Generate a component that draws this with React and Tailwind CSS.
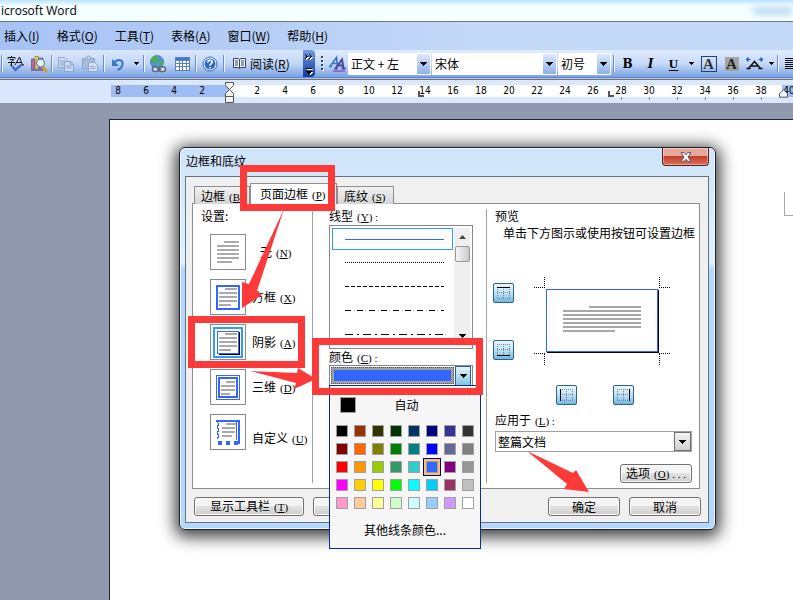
import React from "react";

const CJK = "font-['Noto_Sans_CJK_SC',sans-serif]";

function Sep() {
  return (
    <span className="flex h-[17px] w-1 shrink-0 justify-center">
      <span className="w-px bg-[#6a8ccb]" />
      <span className="w-px bg-[#f1f6ff]" />
    </span>
  );
}

function Tool({ label, children, width = "w-6" }) {
  return (
    <button type="button" aria-label={label} className={`flex h-6 shrink-0 items-center justify-center ${width}`}>
      {children}
    </button>
  );
}

function Caret({ className = "" }) {
  return (
    <svg width="7" height="4" viewBox="0 0 7 4" className={className} shapeRendering="crispEdges">
      <path d="M0 0h7v1H0zM1 1h5v1H1zM2 2h3v1H2zM3 3h1v1H3z" fill="#000" />
    </svg>
  );
}

function SmallCaret() {
  return (
    <svg width="5" height="3" viewBox="0 0 5 3" shapeRendering="crispEdges">
      <path d="M0 0h5v1H0zM1 1h3v1H1zM2 2h1v1H2z" fill="#000" />
    </svg>
  );
}

function Combo({ label, value, width }) {
  return (
    <label className={`mr-px flex h-[22px] shrink-0 border border-white bg-white ${width}`}>
      <select aria-label={label} className="min-w-0 flex-1 appearance-none bg-white pl-[2px] text-xs leading-[18px] text-black outline-none">
        <option>{value}</option>
      </select>
      <span className="flex w-[13px] items-center justify-center bg-linear-to-b from-[#dce9fc] to-[#8fb1e8]">
        <Caret />
      </span>
    </label>
  );
}

const menus = [
  ["插入", "I"],
  ["格式", "O"],
  ["工具", "T"],
  ["表格", "A"],
  ["窗口", "W"],
  ["帮助", "H"],
];

function MenuBar() {
  return (
    <nav className="flex h-7 shrink-0 items-center gap-[17px] bg-linear-to-r from-[#a6c2f5] to-[#c4d8f8] to-60% pl-1 text-xs">
      {menus.map(([name, key]) => (
        <button type="button" key={key} className="shrink-0 whitespace-nowrap">
          {name}(<u className="underline-offset-2">{key}</u>)
        </button>
      ))}
    </nav>
  );
}

function ToolBar() {
  return (
    <div className="flex h-[27px] shrink-0 items-center overflow-hidden bg-linear-to-b from-[#dbe8fd] via-[#c2d7f8] to-[#7ba2e2]">
      <Sep />
      <Tool label="拼写和语法" width="w-[23px]">
        <svg width="18" height="18" viewBox="0 0 18 18" fill="none">
          <path d="M1 4V2.500H8V4M4.500 1v1.500M2.500 4.500H7L4.500 6.500V10.500L3 10M1 7.500H8" stroke="#111" />
          <path d="M8 10L12.500 2L15.500 10M9.500 7.500H15M14 10H17" stroke="#111" />
          <path d="M5 11L8.500 15L14 10" stroke="#3f6fd0" strokeWidth="2.500" />
        </svg>
      </Tool>
      <Tool label="信息检索" width="w-[23px]">
        <svg width="18" height="18" viewBox="0 0 18 18">
          <path d="M1.500 4h3v10h-3z" fill="#b06aa8" stroke="#6b3572" strokeWidth=".6" />
          <path d="M5 1.500h3.500V14H5z" fill="#e9cf72" stroke="#8c661e" strokeWidth=".6" />
          <path d="M9 3h4v11H9z" fill="#7d88c8" stroke="#4a4f96" strokeWidth=".6" />
          <path d="M1 14h13v2H1z" fill="#8a6a9a" />
          <path d="M12.500 11.500L17 17" stroke="#d9a02c" strokeWidth="2.800" />
          <circle cx="10.500" cy="8" r="4" fill="#e4f1fb" stroke="#6a7894" strokeWidth="1.200" />
        </svg>
      </Tool>
      <Sep />
      <Tool label="复制">
        <svg width="18" height="18" viewBox="0 0 18 18" fill="#ccd9f0" stroke="#91a5cc">
          <path d="M1.500 2.500h6l3 3v7h-9zM3 6h5M3 8h5M3 10h5" />
          <path d="M7.500 6.500h6l3 3v7h-9zM9 11h5.500M9 13h5.500M13.500 6.500v3h3" />
        </svg>
      </Tool>
      <Tool label="粘贴">
        <svg width="18" height="18" viewBox="0 0 18 18" stroke="#91a5cc">
          <path d="M1.500 3.500h12v10h-12z" fill="#a9bbdd" />
          <path d="M5 4.500V2.500h1.500V1h2v1.500H10v2z" fill="#d7e1f4" />
          <path d="M7.500 7.500h6l3 3v6h-9zM9 11.500h5.500M9 13.500h5.500" fill="#d7e1f4" />
        </svg>
      </Tool>
      <Sep />
      <Tool label="撤消">
        <svg width="14" height="14" viewBox="0 0 14 14" fill="none">
          <path d="M3 6C6 2 12 2 11.500 7C11.200 10 9 12 6.500 13" stroke="#3f73cf" strokeWidth="2.200" />
          <path d="M1 2v7h7z" fill="#3f73cf" />
        </svg>
      </Tool>
      <Tool label="撤消列表" width="w-3">
        <SmallCaret />
      </Tool>
      <Sep />
      <Tool label="插入超链接">
        <svg width="18" height="18" viewBox="0 0 18 18">
          <circle cx="8" cy="7" r="6.500" fill="#4f93dc" stroke="#2a5aa0" strokeWidth=".6" />
          <path d="M3 3C5 0 9 1 10 1.500L8.500 4L10 6L7 8.500L5 7L3 8L1.800 6zM11 6l3 1-1 4-3-2z" fill="#4caf50" />
          <g fill="none" stroke="#5b6678" strokeWidth="1.500">
            <rect x="3.500" y="12" width="6.500" height="4.500" rx="2.200" fill="#dfe6f0" />
            <rect x="10" y="12" width="6.500" height="4.500" rx="2.200" fill="#dfe6f0" />
            <path d="M7.500 14.200h5" />
          </g>
        </svg>
      </Tool>
      <Tool label="插入表格">
        <svg width="15" height="14" viewBox="0 0 15 14" shapeRendering="crispEdges">
          <rect width="15" height="14" fill="#5f80c0" />
          <rect x="1" y="1" width="13" height="2" fill="#3f74d8" />
          <path d="M1 4h3v2H1zM5 4h2v2H5zM8 4h3v2H8zM12 4h2v2h-2zM1 7h3v2H1zM5 7h2v2H5zM8 7h3v2H8zM12 7h2v2h-2zM1 10h3v3H1zM5 10h2v3H5zM8 10h3v3H8zM12 10h2v3h-2z" fill="#fff" />
        </svg>
      </Tool>
      <Sep />
      <Tool label="帮助">
        <svg width="16" height="16" viewBox="0 0 16 16" fill="none">
          <circle cx="8" cy="8" r="7" fill="#fff" stroke="#3265ba" />
          <circle cx="8" cy="8" r="5.500" fill="#2d68ce" />
          <path d="M5.800 6.500C5.800 3.500 10.300 3.600 10.200 6.300C10.200 7.800 8 7.700 8 9.800M8 11v1.600" stroke="#fff" strokeWidth="1.600" />
        </svg>
      </Tool>
      <Sep />
      <button type="button" className="flex h-6 w-[77px] shrink-0 items-center gap-[3px] whitespace-nowrap pl-[6px] text-xs">
        <svg width="15" height="13" viewBox="0 0 15 13" fill="none" stroke="#39435a">
          <path d="M1.500 1.500h4.500l1.500 1L9 1.500h4.500v9H9l-1.500 1L6 10.500H1.500z" fill="#eef3fc" />
          <path d="M7.500 2.500v9M3 4h3M3 6h3M3 8h3M9 4h3M9 6h3M9 8h3" />
        </svg>
        <span>
          阅读(<u className="underline-offset-2">R</u>)
        </span>
      </button>
      <button type="button" aria-label="工具栏选项" className="flex h-full w-3 shrink-0 flex-col items-center justify-between rounded-r-sm bg-linear-to-b from-[#6f9be2] to-[#0c3a98] pt-1 pb-[2px]">
        <svg width="8" height="6" viewBox="0 0 8 6" shapeRendering="crispEdges">
          <path d="M1 1h1v1h1v1h1v1H3v1H2v1H1zM5 1h1v1h1v1h1v1H7v1H6v1H5z" fill="#fff" />
          <path d="M0 0h1v1h1v1h1v1H2v1H1v1H0V4h1V1H0zM4 0h1v1h1v1h1v1H6v1H5v1H4V4h1V1H4z" fill="#000" />
        </svg>
        <svg width="8" height="8" viewBox="0 0 8 8" shapeRendering="crispEdges">
          <path d="M2 2h6v1H2zM3 5h5v1H7v1H6v1H5V7H4z" fill="#fff" />
          <path d="M1 1h6v1H1zM1 4h6v1H6v1H5v1H3V6H2V5H1z" fill="#000" />
        </svg>
      </button>
      <div className="ml-[2px] flex h-full flex-1 items-center rounded-l-sm bg-linear-to-b from-[#e0ebfe] via-[#c6daf9] to-[#7ba2e2]">
        <svg width="9" height="17" viewBox="0 0 9 17" shapeRendering="crispEdges" className="shrink-0">
          <path d="M5 2h2v2H5zM5 6h2v2H5zM5 10h2v2H5zM5 14h2v2H5z" fill="#fff" />
          <path d="M4 1h2v2H4zM4 5h2v2H4zM4 9h2v2H4zM4 13h2v2H4z" fill="#274176" />
        </svg>
        <Tool label="格式窗格" width="w-[22px]">
          <svg width="17" height="17" viewBox="0 0 17 17" fill="none">
            <path d="M1 11.500L7.500 2.500L8.500 11.500M4 8.500h4.500M0 11.500h3" stroke="#3976cc" strokeWidth="1.600" />
            <path d="M6.500 13.500L13 4.500L14.500 13.500M9.500 10.500h4.500M5.500 13.500h3M12.500 13.500h4" stroke="#4a489c" strokeWidth="2" />
            <path d="M4 16h12" stroke="#9354c0" strokeWidth="1.500" />
          </svg>
        </Tool>
        <Combo label="样式" value="正文 + 左" width="w-[83px]" />
        <Combo label="字体" value="宋体" width="w-[125px]" />
        <Combo label="字号" value="初号" width="w-[53px]" />
        <Sep />
        <Tool label="加粗" width="w-[23px]">
          <span className="font-['DejaVu_Serif',serif] text-[12px] font-bold leading-4">B</span>
        </Tool>
        <Tool label="倾斜" width="w-[23px]">
          <span className="font-['DejaVu_Serif',serif] text-[12px] font-bold italic leading-4">I</span>
        </Tool>
        <Tool label="下划线" width="w-[23px]">
          <span className="font-['Liberation_Serif',serif] text-[13px] font-bold leading-4 underline underline-offset-2">U</span>
        </Tool>
        <Tool label="下划线样式" width="w-3">
          <SmallCaret />
        </Tool>
        <Tool label="字符边框" width="w-[23px]">
          <span className="flex size-4 items-center justify-center border border-[#24406f] font-['Liberation_Serif',serif] text-[15px] font-bold leading-4 text-[#333]">A</span>
        </Tool>
        <Tool label="字符底纹" width="w-[23px]">
          <span className="flex size-[14px] items-center justify-center bg-[#a3a3a3] font-['Liberation_Serif',serif] text-[15px] font-bold leading-4 text-[#222]">A</span>
        </Tool>
        <Tool label="字符缩放" width="w-[23px]">
          <svg width="17" height="14" viewBox="0 0 17 14" fill="none">
            <path d="M2.500 11.500L8.500 4.500L14.500 11.500M5 9h7M.500 11.500h4M12.500 11.500h4" stroke="#111" strokeWidth="1.500" />
            <path d="M0 2.500h4.500M2.500 .500L.500 2.500L2.500 4.500M12.500 2.500h4.500M14.500 .500L16.500 2.500L14.500 4.500" stroke="#1852d0" strokeWidth="1.200" />
          </svg>
        </Tool>
        <Tool label="缩放列表" width="w-[10px]">
          <SmallCaret />
        </Tool>
        <Sep />
        <Tool label="对齐">
          <svg width="14" height="11" viewBox="0 0 14 11" shapeRendering="crispEdges">
            <path d="M0 0h14v1H0zM0 2h14v1H0zM0 4h14v1H0zM0 6h14v1H0zM0 8h14v1H0zM0 10h14v1H0z" fill="#111" />
          </svg>
        </Tool>
      </div>
    </div>
  );
}

const rulerNumbers = Array.from({ length: 19 }, (_, i) => (i + 1) * 2);

function Ruler() {
  return (
    <div className="relative flex h-[23px] shrink-0 overflow-hidden bg-[#dbe7fd] pt-[5px] pl-[111px] text-center font-['DejaVu_Sans_Condensed','DejaVu_Sans',sans-serif] text-[10px] leading-3">
      <div className="flex h-3 w-[119px] shrink-0 bg-[#9fbcf4]">
        <span className="w-[21px] pr-[7px]">8</span>
        <span className="w-7">6</span>
        <span className="w-7">4</span>
        <span className="w-7">2</span>
      </div>
      <div className="flex h-3 w-[552px] shrink-0 bg-white pl-[13px]">
        {rulerNumbers.map((n) => (
          <span key={n} className="flex w-7 shrink-0 flex-col items-center">
            <span>{n}</span>
            {n >= 28 && <span className="h-[3px] w-px shrink-0 bg-[#7c8494]" />}
          </span>
        ))}
      </div>
      <div className="h-3 flex-1 bg-[#9fbcf4]">
        <span className="block w-[14px]">40</span>
      </div>
      <svg width="9" height="21" viewBox="0 0 9 21" fill="#f4f4f4" stroke="#555" className="absolute top-[2px] left-[225px]">
        <path d="M.500 .500h8v3L4.500 7.500L.500 3.500zM4.500 7.500l4 4v3H.500v-3zM.500 14.500h8v6h-8z" />
      </svg>
      <svg width="6" height="6" viewBox="0 0 6 6" className="absolute top-[11px] left-[418px]">
        <path d="M0 0h2v4h4v2H0z" fill="#555" />
      </svg>
      <svg width="6" height="6" viewBox="0 0 6 6" className="absolute top-[11px] left-[608px]">
        <path d="M0 0h2v4h4v2H0z" fill="#555" />
      </svg>
      <svg width="9" height="9" viewBox="0 0 9 9" className="absolute top-[9px] left-[779px]">
        <path d="M4.500 .700l4 4v3.500H.500V4.700z" fill="#f4f4f4" stroke="#555" />
      </svg>
    </div>
  );
}

/* Access key shown after a dialog label, e.g. (N) */
function Key({ k, after = "" }) {
  return (
    <span className="ml-1 font-['Liberation_Serif',serif] text-[11px]">
      (<u className="underline-offset-1">{k}</u>){after}
    </span>
  );
}

function DialogButton({ children, width }) {
  return (
    <button type="button" className={`h-[19px] shrink-0 whitespace-nowrap rounded-[3px] border border-[#707070] bg-linear-to-b from-[#f4f4f4] from-45% via-[#e2e2e2] via-50% to-[#cdcdcd] text-xs leading-[15px] shadow-[inset_0_0_0_1px_#fafafa] ${width}`}>
      {children}
    </button>
  );
}

const textLines = "M14 7h15v2H14zM7 11h22v2H7zM7 15h22v2H7zM7 19h22v2H7zM7 23h22v2H7zM7 27h15v2H7z";
const innerLines = "M15 9h12v2H15zM9 13h18v2H9zM9 17h18v2H9zM9 21h18v2H9zM9 25h12v2H9z";

const settings = [
  { name: "无", k: "N", pad: "pl-2", art: <path d={textLines} fill="#aaa" /> },
  {
    name: "方框",
    k: "X",
    pad: "",
    art: (
      <>
        <rect x="7" y="7" width="22" height="23" fill="none" stroke="#36f" strokeWidth="2" />
        <path d={innerLines} fill="#aaa" />
      </>
    ),
  },
  {
    name: "阴影",
    k: "A",
    pad: "",
    art: (
      <>
        <rect x="4" y="4" width="28" height="29" fill="none" stroke="#39f" strokeWidth="2" />
        <path d="M28 8h2v23H9v-2h19z" fill="#000" />
        <rect x="7.500" y="7.500" width="21" height="22" fill="#fff" stroke="#36f" />
        <path d={innerLines} fill="#aaa" />
      </>
    ),
  },
  {
    name: "三维",
    k: "D",
    pad: "",
    art: (
      <>
        <rect x="6.500" y="6.500" width="23" height="24" fill="none" stroke="#36f" />
        <rect x="9" y="9" width="18" height="19" fill="none" stroke="#36f" strokeWidth="2" />
        <path d="M16 12h9v2h-9zM11 16h14v2H11zM11 20h14v2H11zM11 24h9v2h-9z" fill="#aaa" />
      </>
    ),
  },
  {
    name: "自定义",
    k: "U",
    pad: "pt-3",
    art: (
      <>
        <path d="M6 6h24v2H6zM26 8h1v18h-1zM28 8h2v22h-2zM8 27h4v4H8zM16 27h4v4h-4zM24 27h4v4h-4z" fill="#36f" />
        <path d="M7 8l2 2-2 3 2 3-2 3 2 3-2 3" fill="none" stroke="#36f" />
        <path d="M16 9h10v2H16zM12 13h13v2H12zM12 17h13v2H12zM12 21h10v2H12z" fill="#aaa" />
      </>
    ),
  },
];

function SettingsColumn() {
  return (
    <fieldset className="flex w-[120px] shrink-0 flex-col border-r border-[#a0a0a0] pl-2">
      <div className="h-[25px] leading-[14px]">设置:</div>
      <div className="flex flex-col gap-[9px] pl-[9px]">
        {settings.map((s, i) => (
          <label key={s.k} className="flex h-9 items-center gap-[6px] whitespace-nowrap">
            <input type="radio" name="border-setting" defaultChecked={i === 2} className="sr-only" />
            <svg width="36" height="36" viewBox="1 1 34 34" shapeRendering="crispEdges" className="shrink-0 border border-[#8a8a92] bg-white">
              {s.art}
            </svg>
            <span className={s.pad}>
              {s.name}
              <Key k={s.k} />
            </span>
          </label>
        ))}
      </div>
    </fieldset>
  );
}

const palette = [
  "bg-[#000000]", "bg-[#993300]", "bg-[#333300]", "bg-[#003300]", "bg-[#003366]", "bg-[#000080]", "bg-[#333399]", "bg-[#333333]",
  "bg-[#800000]", "bg-[#ff6600]", "bg-[#808000]", "bg-[#008000]", "bg-[#008080]", "bg-[#0000ff]", "bg-[#666699]", "bg-[#808080]",
  "bg-[#ff0000]", "bg-[#ff9900]", "bg-[#99cc00]", "bg-[#339966]", "bg-[#33cccc]", "bg-[#3366ff]", "bg-[#800080]", "bg-[#969696]",
  "bg-[#ff00ff]", "bg-[#ffcc00]", "bg-[#ffff00]", "bg-[#00ff00]", "bg-[#00ffff]", "bg-[#00ccff]", "bg-[#993366]", "bg-[#c0c0c0]",
  "bg-[#ff99cc]", "bg-[#ffcc99]", "bg-[#ffff99]", "bg-[#ccffcc]", "bg-[#ccffff]", "bg-[#99ccff]", "bg-[#cc99ff]", "bg-[#ffffff]",
];

function ColorMenu() {
  return (
    <div className="absolute top-5 left-0 z-10 w-[152px] border border-[#0a2f8c] bg-[#f6f6f6] px-[3px] pt-[10px] pb-2">
      <button type="button" className="flex h-[18px] w-full items-center pl-[7px]">
        <span className="size-4 border border-[#a0a0a0] bg-black" />
        <span className="flex-1 pr-5 text-center leading-[18px]">自动</span>
      </button>
      <div className="mt-2 grid grid-cols-8">
        {palette.map((c, i) => (
          <button
            type="button"
            key={c}
            aria-label={c.slice(4, 11)}
            className={`flex size-[18px] items-center justify-center ${i === 21 ? "border border-[#000080] bg-[#ffc06f]" : ""}`}
          >
            <span className={`size-3 border border-[#a0a0a0] ${c}`} />
          </button>
        ))}
      </div>
      <button type="button" className="mt-2 block h-5 w-full text-center leading-5">
        其他线条颜色...
      </button>
    </div>
  );
}

const lineStyles = ["1 1", "4 2", "6 6", "8 4 2 4"];

function StyleColumn() {
  return (
    <div className="flex w-[174px] shrink-0 flex-col border-r border-[#a0a0a0] pl-4">
      <div className="h-4 leading-[14px]">
        线型
        <Key k="Y" after=" :" />
      </div>
      <div className="flex h-[124px] w-36 border border-[#828790] bg-white p-[2px]">
        <div className="flex flex-1 flex-col overflow-hidden">
          <div className="flex h-[22px] w-[121px] shrink-0 items-center border border-[#39f] pl-3">
            <span className="h-px w-[99px] bg-[#36f]" />
          </div>
          {lineStyles.map((dash) => (
            <svg key={dash} width="121" height="24" viewBox="0 0 121 24" shapeRendering="crispEdges" className="shrink-0">
              <path d="M13 12.500H112" stroke="#000" strokeDasharray={dash} />
            </svg>
          ))}
        </div>
        <div className="flex w-4 flex-col items-center justify-between bg-[#efefef] pt-[7px] pb-2">
          <div className="flex flex-col items-center gap-[7px]">
            <svg width="7" height="4" viewBox="0 0 7 4">
              <path d="M3.500 0L7 4H0z" fill="#444" />
            </svg>
            <span className="h-4 w-[15px] rounded-xs border border-[#979797] bg-linear-to-r from-[#f6f6f6] to-[#c9c9c9]" />
          </div>
          <Caret />
        </div>
      </div>
      <div className="h-4 leading-4">
        颜色
        <Key k="C" after=" :" />
      </div>
      <div className="relative w-36">
        <button type="button" aria-label="颜色" className="flex h-[21px] w-full border border-[#828790] bg-white p-px">
          <span className="flex h-[17px] flex-1 border border-dotted border-[#555] bg-[#a0a0a0] p-[2px]">
            <span className="flex-1 bg-[#36f]" />
          </span>
          <span className="-my-px ml-px flex h-5 w-4 items-center justify-center border border-[#2c628b] bg-linear-to-b from-[#e3f4fc] to-[#7fc5ea]">
            <Caret />
          </span>
        </button>
        <ColorMenu />
      </div>
    </div>
  );
}

const edgePaths = {
  上框线: "M4 4h13v1H4z",
  下框线: "M4 15h13v1H4z",
  左框线: "M4 4h1v12H4z",
  右框线: "M16 4h1v12h-1z",
};

function EdgeButton({ name }) {
  return (
    <button type="button" aria-label={name} className="block h-5 w-[21px] rounded-xs border border-[#2c628b] bg-linear-to-b from-[#eaf6fd] via-[#bfe3f5] to-[#6fb8e2]">
      <svg width="19" height="18" viewBox="1 1 19 18" shapeRendering="crispEdges">
        <path d="M4 4.500h13M4 9.500h13M4 15.500h13M4.500 4v12M10.500 4v12M16.500 4v12" stroke="#7a8b98" strokeDasharray="1 1" />
        <path d={edgePaths[name]} fill="#000" />
      </svg>
    </button>
  );
}

function PreviewColumn() {
  return (
    <div className="flex min-w-0 flex-1 flex-col pr-[7px] pl-2">
      <div className="h-[17px] leading-[14px]">预览</div>
      <div className="h-[14px] whitespace-nowrap pl-2 leading-[14px]">单击下方图示或使用按钮可设置边框</div>
      <div className="-ml-[2px] mt-[37px] flex gap-5">
        <div className="flex flex-col gap-[37px] pt-[6px]">
          <EdgeButton name="上框线" />
          <EdgeButton name="下框线" />
        </div>
        <svg width="136" height="88" viewBox="0 0 136 88" shapeRendering="crispEdges" className="shrink-0">
          <path d="M0 10.500H11M10.500 0V11M125 10.500H136M125.500 0V11M0 76.500H11M10.500 77V88M125 76.500H136M125.500 77V88" stroke="#000" strokeDasharray="1 1" fill="none" />
          <path d="M13 75h112v1H13zM124 13h1v63h-1z" fill="#000" />
          <rect x="12.500" y="12.500" width="111" height="62" fill="#fff" stroke="#36f" />
          <path d="M55 29h52v2H55zM29 33h78v2H29zM29 37h78v2H29zM29 41h78v2H29zM29 45h78v2H29zM29 49h78v2H29zM29 53h52v2H29z" fill="#a8a8a8" />
        </svg>
      </div>
      <div className="mt-5 flex justify-center gap-9 pl-[2px]">
        <EdgeButton name="左框线" />
        <EdgeButton name="右框线" />
      </div>
      <label htmlFor="apply-to" className="mt-2 h-[18px] leading-[14px]">
        应用于
        <Key k="L" after=" :" />
      </label>
      <div className="flex h-[21px] border border-[#a0a0a8] bg-white">
        <select id="apply-to" className="min-w-0 flex-1 appearance-none bg-white pl-[2px] leading-[18px] outline-none">
          <option>整篇文档</option>
        </select>
        <span className="flex w-[17px] items-center justify-center border border-[#707070] bg-linear-to-b from-[#f4f4f4] to-[#d0d0d0]">
          <Caret />
        </span>
      </div>
      <div className="mt-3 flex justify-end">
        <DialogButton width="w-[72px]">
          选项
          <Key k="O" after=" . . ." />
        </DialogButton>
      </div>
    </div>
  );
}

function Tabs() {
  const idle = "h-[18px] border border-b-0 border-[#8c8e94] bg-linear-to-b from-[#f2f2f2] to-[#d5d5d5] leading-[18px]";
  return (
    <div role="tablist" className="flex h-[21px] items-end whitespace-nowrap pl-[2px]">
      <button type="button" role="tab" aria-selected="false" className={`w-14 pl-[6px] text-left ${idle}`}>
        边框
        <Key k="B" />
      </button>
      <button type="button" role="tab" aria-selected="true" className="z-1 h-[21px] w-[87px] border border-b-0 border-[#8c8e94] bg-white pl-[9px] text-left leading-5">
        页面边框
        <Key k="P" />
      </button>
      <button type="button" role="tab" aria-selected="false" className={`w-[57px] pl-[6px] text-left ${idle}`}>
        底纹
        <Key k="S" />
      </button>
    </div>
  );
}

function BorderDialog() {
  return (
    <section
      role="dialog"
      aria-label="边框和底纹"
      className="absolute top-[147px] left-[179px] w-[537px] rounded-[6px] border border-[#1b222b] bg-linear-to-b from-[#cfe4fa] via-[#e2f0fd] via-30% to-[#b4d7fb] to-32% pr-[6px] pb-[6px] pl-[5px] text-xs text-black shadow-[inset_0_0_0_1px_#eef7ff,0_3px_16px_4px_rgba(0,0,0,0.75)]"
    >
      <header className="flex h-7 justify-between">
        <h1 className="pl-px leading-[26px]">边框和底纹</h1>
        <button type="button" aria-label="关闭" className="flex h-[18px] w-[47px] items-center justify-center rounded-b-[4px] border border-t-0 border-[#5c1c17] bg-linear-to-b from-[#e6a79c] from-45% via-[#c4402c] via-50% to-[#d9705c] shadow-[inset_0_0_0_1px_rgba(255,255,255,0.4)]">
          <svg width="12" height="10" viewBox="0 0 12 10">
            <path d="M1 .700h3.200L6 2.700 7.800 .700H11L8 5l3 4.300H7.800L6 7.300 4.200 9.300H1L4 5z" fill="#fff" stroke="#535666" />
          </svg>
        </button>
      </header>
      <div className="border border-[#5f7389] bg-[#f0f0f0] pt-[6px] pr-[7px] pb-[6px] pl-[6px]">
        <Tabs />
        <div className="-mt-px mr-px flex h-[286px] border border-[#8c8e94] bg-white py-[5px]">
          <SettingsColumn />
          <StyleColumn />
          <PreviewColumn />
        </div>
        <footer className="mt-2 flex gap-[9px] pl-[2px]">
          <DialogButton width="w-[110px]">
            显示工具栏
            <Key k="T" />
          </DialogButton>
          <DialogButton width="w-[110px]" />
          <div className="ml-auto flex gap-[9px]">
            <DialogButton width="w-[72px]">确定</DialogButton>
            <DialogButton width="w-[72px]">取消</DialogButton>
          </div>
        </footer>
      </div>
    </section>
  );
}

/* Red boxes and arrows that walk the reader through the steps */
function Callouts() {
  return (
    <svg width="793" height="600" viewBox="0 0 793 600" className="pointer-events-none absolute top-0 left-0 z-20">
      <g fill="none" stroke="#fc3a39" strokeWidth="7">
        <rect x="243.500" y="168.500" width="88" height="39" />
        <rect x="191.500" y="319.500" width="110" height="45" />
        <rect x="315.500" y="341.500" width="164" height="50" />
      </g>
      <g fill="#fc3a39">
        <path d="M284 209L249 284L242 282V308L262 295L257 291Z" />
        <path d="M250 371L297 373L298 368L316 379L294 389L296 383Z" />
        <path d="M527 451L573 473L576 470L589 492L564 489L567 484Z" />
      </g>
    </svg>
  );
}

export default function App() {
  return (
    <main className={`relative flex h-screen w-full flex-col overflow-hidden bg-[#9199ae] text-black ${CJK}`}>
      <header className="flex h-[22px] shrink-0 items-center justify-between border-b border-[#6b7686] bg-linear-to-b from-[#b9e2ff] via-[#f0fdff] via-25% to-[#f8ffff] pl-px">
        <span className="font-['Open_Sans',sans-serif] text-xs leading-5">icrosoft Word</span>
        <span className="h-2 w-10 rounded-full bg-[#bcdcf6] blur-[3px]" />
      </header>
      <MenuBar />
      <ToolBar />
      <div className="h-[3px] shrink-0 border-t border-b border-t-[#5d87cf] border-b-[#71757f] bg-[#b9c4da]" />
      <Ruler />
      <div className="flex-1 pt-4 pl-[109px]">
        <div className="flex h-full justify-end border-t border-l border-[#20242c] bg-white pt-[72px]">
          <span className="h-6 w-[9px] border-b border-l border-[#a8a8a8]" />
        </div>
      </div>
      <BorderDialog />
      <Callouts />
    </main>
  );
}
